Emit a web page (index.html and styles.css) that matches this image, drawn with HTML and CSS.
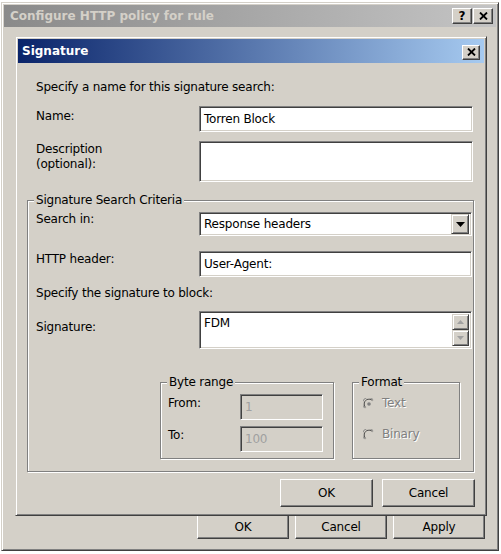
FILE: index.html
```html
<!DOCTYPE html>
<html>
<head>
<meta charset="utf-8">
<link rel="stylesheet" href="styles.css">
</head>
<body>
<div class="win">
  <div class="titlebar inactive">
    <span class="title">Configure HTTP policy for rule</span>
    <div class="cap-btns">
      <div class="cap-btn help">?</div>
      <div class="cap-btn"><svg width="9" height="8" viewBox="0 0 9 8"><path d="M1 0.5 L8 7.5 M8 0.5 L1 7.5" stroke="#000" stroke-width="1.8"/></svg></div>
    </div>
  </div>
  <div class="win-body">
    <div class="btn-row outer-btns">
      <div class="btn">OK</div>
      <div class="btn">Cancel</div>
      <div class="btn">Apply</div>
    </div>
  </div>
</div>

<div class="dlg">
  <div class="titlebar active">
    <span class="title">Signature</span>
    <div class="cap-btn dlg-close"><svg width="9" height="8" viewBox="0 0 9 8"><path d="M1 0.5 L8 7.5 M8 0.5 L1 7.5" stroke="#000" stroke-width="1.8"/></svg></div>
  </div>
  <div class="content">
    <div class="top">
      <div class="intro">Specify a name for this signature search:</div>
      <div class="row name-row">
        <div class="lbl">Name:</div>
        <div class="field h26"><span>Torren Block</span></div>
      </div>
      <div class="row desc-row">
        <div class="lbl">Description<br>(optional):</div>
        <div class="field h41"></div>
      </div>
    </div>

    <div class="group main-group">
      <div class="legend">Signature Search Criteria</div>
      <div class="row search-row">
        <div class="lbl">Search in:</div>
        <div class="field select">
          <span class="sel-text">Response headers</span>
          <div class="drop-btn"><svg width="9" height="5" viewBox="0 0 9 5"><path d="M0 0 H9 L4.5 5 Z" fill="#000"/></svg></div>
        </div>
      </div>
      <div class="row http-row">
        <div class="lbl">HTTP header:</div>
        <div class="field h26"><span>User-Agent:</span></div>
      </div>
      <div class="intro2">Specify the signature to block:</div>
      <div class="row sig-row">
        <div class="lbl">Signature:</div>
        <div class="field sig">
          <span class="sig-text">FDM</span>
          <div class="scroll">
            <div class="sb-btn"><svg width="7" height="4" viewBox="0 0 7 4"><path d="M3.5 0 L7 4 H0 Z" fill="#a0a0a0"/></svg></div>
            <div class="sb-btn"><svg width="7" height="4" viewBox="0 0 7 4"><path d="M0 0 H7 L3.5 4 Z" fill="#a0a0a0"/></svg></div>
          </div>
        </div>
      </div>

      <div class="sub-row">
        <div class="group byte-group">
          <div class="legend">Byte range</div>
          <div class="brow">
            <div class="lbl">From:</div>
            <div class="field disabled"><span>1</span></div>
          </div>
          <div class="brow">
            <div class="lbl">To:</div>
            <div class="field disabled"><span>100</span></div>
          </div>
        </div>
        <div class="group format-group">
          <div class="legend">Format</div>
          <div class="radio">
            <svg width="12" height="12" viewBox="0 0 12 12"><path d="M10.2 1.8 A6 6 0 1 0 1.8 10.2" fill="none" stroke="#808080" stroke-width="1"/><path d="M9.4 2.6 A4.8 4.8 0 1 0 2.6 9.4" fill="none" stroke="#404040" stroke-width="1"/><circle cx="6" cy="6" r="4.2" fill="#d4d0c8"/><circle cx="6" cy="6" r="1.8" fill="#808080"/></svg>
            <span class="dis-text">Text</span>
          </div>
          <div class="radio">
            <svg width="12" height="12" viewBox="0 0 12 12"><path d="M10.2 1.8 A6 6 0 1 0 1.8 10.2" fill="none" stroke="#808080" stroke-width="1"/><path d="M9.4 2.6 A4.8 4.8 0 1 0 2.6 9.4" fill="none" stroke="#404040" stroke-width="1"/><circle cx="6" cy="6" r="4.2" fill="#d4d0c8"/></svg>
            <span class="dis-text">Binary</span>
          </div>
        </div>
      </div>
    </div>

    <div class="btn-row dlg-btns">
      <div class="btn big">OK</div>
      <div class="btn big">Cancel</div>
    </div>
  </div>
</div>
</body>
</html>
```
FILE: styles.css
```css
* { box-sizing: border-box; }
html, body { margin: 0; padding: 0; }
body {
  width: 501px;
  height: 554px;
  background: #ffffff;
  font-family: "DejaVu Sans", sans-serif;
  font-size: 12px;
  letter-spacing: -0.2px;
  color: #000;
  overflow: hidden;
  position: relative;
}

.win {
  margin: 2px 0 0 1px;
  width: 498px;
  height: 549px;
  background: #d4d0c8;
  border: 1px solid;
  border-color: #d4d0c8 #404040 #404040 #d4d0c8;
  box-shadow: inset 1px 1px #fff, inset -1px -1px #808080;
  padding: 2px;
  display: flex;
  flex-direction: column;
}

.titlebar {
  display: flex;
  align-items: center;
  justify-content: space-between;
  font-weight: bold;
  font-size: 12px;
  letter-spacing: 0;
}
.titlebar.inactive {
  height: 22px;
  padding: 0 3px 0 6px;
  background: linear-gradient(to right, #8a8a8a, #c4c4c4);
  color: #d4d0c8;
}
.titlebar.active {
  height: 24px;
  padding: 0 4px 0 4px;
  background: linear-gradient(to right, #0a246a, #a6caf0);
  color: #fff;
}

.cap-btns { display: flex; gap: 1px; }
.cap-btn {
  width: 20px;
  height: 16px;
  background: #d4d0c8;
  border: 1px solid;
  border-color: #fff #404040 #404040 #fff;
  box-shadow: inset -1px -1px #808080;
  display: flex;
  align-items: center;
  justify-content: center;
  color: #000;
  font-size: 12px;
  font-weight: bold;
}
.dlg-close { width: 18px; height: 15px; margin-top: 2px; }

.win-body {
  flex: 1;
  display: flex;
  flex-direction: column;
  justify-content: flex-end;
  padding: 0 11px 9px 0;
}

.btn-row { display: flex; justify-content: flex-end; }
.outer-btns { gap: 6px; }
.btn {
  width: 92px;
  height: 25px;
  background: #d4d0c8;
  border: 1px solid;
  border-color: #fff #404040 #404040 #fff;
  box-shadow: inset -1px -1px #808080;
  display: flex;
  align-items: center;
  justify-content: center;
}
.btn.big { width: 93px; height: 28px; }

.dlg {
  position: absolute;
  left: 15px;
  top: 36px;
  width: 472px;
  background: #d4d0c8;
  border: 1px solid;
  border-color: #d4d0c8 #404040 #404040 #d4d0c8;
  box-shadow: inset 1px 1px #fff, inset -1px -1px #808080;
  padding: 2px;
}

.content {
  display: flex;
  flex-direction: column;
  padding: 16px 10px 6px 9px;
  line-height: 15px;
}

.top { padding: 0 1px 0 9px; }
.intro { line-height: 16px; }

.row { display: grid; grid-template-columns: 163px 1fr; }
.name-row { margin-top: 11px; }
.name-row .lbl { padding-top: 3px; }
.desc-row { margin-top: 9px; }
.desc-row .lbl { padding-top: 1px; }

.field {
  background: #fff;
  border: 1px solid;
  border-color: #808080 #fff #fff #808080;
  box-shadow: inset 1px 1px #404040, inset -1px -1px #d4d0c8;
  padding: 0 4px;
  display: flex;
  align-items: center;
}
.h26 { height: 26px; }
.h41 { height: 41px; }

.group {
  position: relative;
  border: 1px solid #808080;
  box-shadow: 1px 1px #fff, inset 1px 1px #fff;
}
.legend {
  position: absolute;
  top: -8px;
  left: 6px;
  padding: 0 2px;
  background: #d4d0c8;
  line-height: 15px;
}

.main-group {
  margin-top: 18px;
  padding: 11px 1px 12px 8px;
}

.select { height: 24px; padding: 0 2px 0 4px; }
.sel-text { flex: 1; }
.search-row .lbl { padding-top: 0; }
.drop-btn {
  width: 18px;
  height: 20px;
  background: #d4d0c8;
  border: 1px solid;
  border-color: #d4d0c8 #404040 #404040 #d4d0c8;
  box-shadow: inset 1px 1px #fff, inset -1px -1px #808080;
  display: flex;
  align-items: center;
  justify-content: center;
}

.http-row { margin-top: 15px; }
.http-row .lbl { padding-top: 1px; }

.intro2 { margin-top: 9px; }

.sig-row { margin-top: 10px; }
.sig-row .lbl { padding-top: 9px; }
.sig {
  height: 38px;
  align-items: stretch;
  padding: 2px 2px 2px 4px;
}
.sig-text { flex: 1; padding-top: 2px; }
.scroll { display: flex; flex-direction: column; width: 17px; }
.sb-btn {
  height: 17px;
  background: #d4d0c8;
  border: 1px solid;
  border-color: #d4d0c8 #404040 #404040 #d4d0c8;
  box-shadow: inset 1px 1px #fff, inset -1px -1px #808080;
  display: flex;
  align-items: center;
  justify-content: center;
}

.sub-row {
  display: flex;
  gap: 18px;
  margin: 33px 0 0 124px;
}
.byte-group {
  width: 174px;
  height: 77px;
  padding: 11px 10px 0 7px;
  display: flex;
  flex-direction: column;
  gap: 6px;
}
.brow { display: grid; grid-template-columns: 72px 1fr; }
.brow .lbl { padding-top: 2px; }
.field.disabled {
  background: #d4d0c8;
  height: 26px;
  color: #a0a0a0;
}

.format-group {
  width: 108px;
  height: 77px;
  padding: 13px 0 0 10px;
  display: flex;
  flex-direction: column;
  gap: 16px;
}
.radio { display: flex; align-items: center; gap: 7px; }
.dis-text { color: #808080; text-shadow: 1px 1px #fff; }

.dlg-btns { gap: 9px; margin: 7px -1px 0 0; }
```
